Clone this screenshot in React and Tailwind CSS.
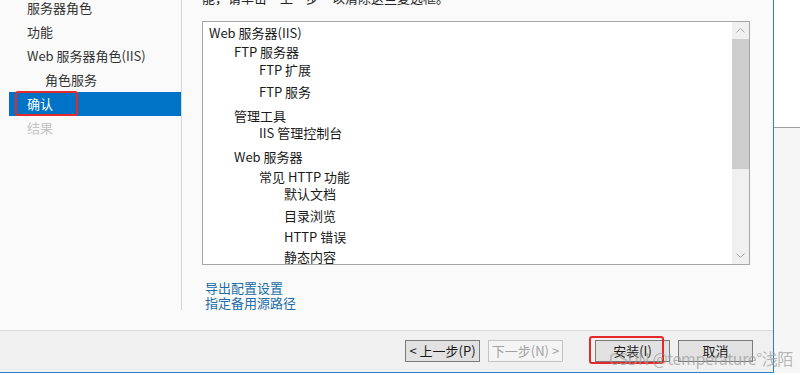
import React from "react";

const FONT = { fontFamily: '"Noto Sans CJK SC", "Noto Sans", sans-serif' };

const NAV = [
  { label: "服务器角色", cls: "pl-[18px] text-[#333]" },
  { label: "功能", cls: "pl-[18px] text-[#333]" },
  { label: "Web 服务器角色(IIS)", cls: "pl-[18px] text-[#333]" },
  { label: "角色服务", cls: "pl-[36px] text-[#333]" },
  { label: "确认", cls: "pl-[18px] bg-[#0173c7] text-white", active: true },
  { label: "结果", cls: "pl-[18px] text-[#c4c4c4]" },
];

// indent per level, spacing per row as the wizard draws it
const INDENT = ["pl-[6px]", "pl-[31px]", "pl-[56px]", "pl-[81px]"];
const ROWS = [
  { t: "Web 服务器(IIS)", lvl: 0, mt: "mt-0" },
  { t: "FTP 服务器", lvl: 1, mt: "mt-[2px]" },
  { t: "FTP 扩展", lvl: 2, mt: "mt-[1px]" },
  { t: "FTP 服务", lvl: 2, mt: "mt-[5px]" },
  { t: "管理工具", lvl: 1, mt: "mt-[7px]" },
  { t: "IIS 管理控制台", lvl: 2, mt: "mt-0" },
  { t: "Web 服务器", lvl: 1, mt: "mt-[7px]" },
  { t: "常见 HTTP 功能", lvl: 2, mt: "mt-[3px]" },
  { t: "默认文档", lvl: 3, mt: "mt-0" },
  { t: "目录浏览", lvl: 3, mt: "mt-[5px]" },
  { t: "HTTP 错误", lvl: 3, mt: "mt-[4px]" },
  { t: "静态内容", lvl: 3, mt: "mt-[3px]" },
];

function Chevron({ up }) {
  return (
    <svg width="9" height="5" viewBox="0 0 9 5" fill="none">
      <polyline
        points={up ? "0.5,4.5 4.5,0.5 8.5,4.5" : "0.5,0.5 4.5,4.5 8.5,0.5"}
        stroke="#a6a6a6"
        strokeWidth="1"
      />
    </svg>
  );
}

function WizButton({ children, disabled, className = "" }) {
  return (
    <div
      className={`relative w-[75px] h-[22px] flex items-center justify-center text-[13px] border ${
        disabled
          ? "bg-[#f4f4f4] border-[#c4c4c4] text-[#a2a2a2]"
          : "bg-[#e1e1e1] border-[#7a7a7a] text-[#1a1a1a]"
      } ${className}`}
    >
      {children}
    </div>
  );
}

export default function App() {
  return (
    <div className="relative w-[800px] h-[375px] bg-white overflow-hidden" style={FONT}>
      <div className="flex h-[373px]">
        {/* wizard window */}
        <div className="w-[774px] flex flex-col border-r border-b border-[#2b7fd0] bg-[#fafafa]">
          <div className="flex h-[330px]">
            {/* left nav */}
            <div className="relative w-[182px] h-[310px] border-r border-[#d6d6d6]">
              <div className="-mt-[4px] ml-[9px] w-[172px]">
                {NAV.map((n) => (
                  <div key={n.label} className={`h-[24px] flex items-center text-[13px] ${n.cls}`}>
                    {n.label}
                  </div>
                ))}
              </div>
              <div className="absolute left-[15px] top-[91px] w-[63px] h-[25px] border-2 border-[#e5292a] rounded-[3px]" />
            </div>

            {/* content */}
            <div className="flex-1 pl-[20px] pr-[23px]">
              <div className="h-[21px] overflow-hidden">
                <div className="-mt-[10px] leading-[16px] text-[13px] text-[#222] whitespace-nowrap">
                  能，请单击“上一步”以清除这些复选框。
                </div>
              </div>
              <div className="h-[244px] flex border border-[#a6a6a6] bg-white">
                <div className="flex-1 pt-[2px] overflow-hidden">
                  {ROWS.map((r) => (
                    <div
                      key={r.t}
                      className={`h-[17px] leading-[17px] text-[13px] text-[#1a1a1a] whitespace-nowrap ${INDENT[r.lvl]} ${r.mt}`}
                    >
                      {r.t}
                    </div>
                  ))}
                </div>
                <div className="w-[17px] flex flex-col bg-[#f0f0f0]">
                  <div className="h-[17px] flex items-center justify-center">
                    <Chevron up />
                  </div>
                  <div className="flex-1">
                    <div className="h-[130px] bg-[#cdcdcd]" />
                  </div>
                  <div className="h-[17px] flex items-center justify-center">
                    <Chevron />
                  </div>
                </div>
              </div>
              <div className="mt-[15px] pl-[3px] text-[13px] text-[#1a6ea8]">
                <div className="h-[15px] leading-[15px]">导出配置设置</div>
                <div className="h-[15px] leading-[15px]">指定备用源路径</div>
              </div>
            </div>
          </div>

          {/* button bar */}
          <div className="flex-1 flex items-start pt-[9px] pl-[405px] border-t border-[#d9d9d9] bg-[#f0f0f0]">
            <WizButton>&lt; 上一步(P)</WizButton>
            <WizButton disabled className="ml-[8px]">
              下一步(N) &gt;
            </WizButton>
            <WizButton className="ml-[32px]">
              安装(I)
              <div className="absolute -left-[7px] -top-[5px] w-[75px] h-[28px] border-[2.5px] border-[#e5292a] rounded-[3px]" />
            </WizButton>
            <WizButton className="ml-[8px]">取消</WizButton>
          </div>
        </div>

        {/* desktop strip to the right */}
        <div className="flex-1 flex flex-col">
          <div className="h-[128px] border-b border-[#a0a0a0] bg-white" />
          <div className="flex-1 bg-[#f6f6f6]" />
        </div>
      </div>

      <div className="absolute left-[609px] top-[348px] text-[16px] tracking-[-0.4px] leading-[20px] text-[#9a9a9a]/70 whitespace-nowrap">
        CSDN @temperature°浅陌
      </div>
    </div>
  );
}
